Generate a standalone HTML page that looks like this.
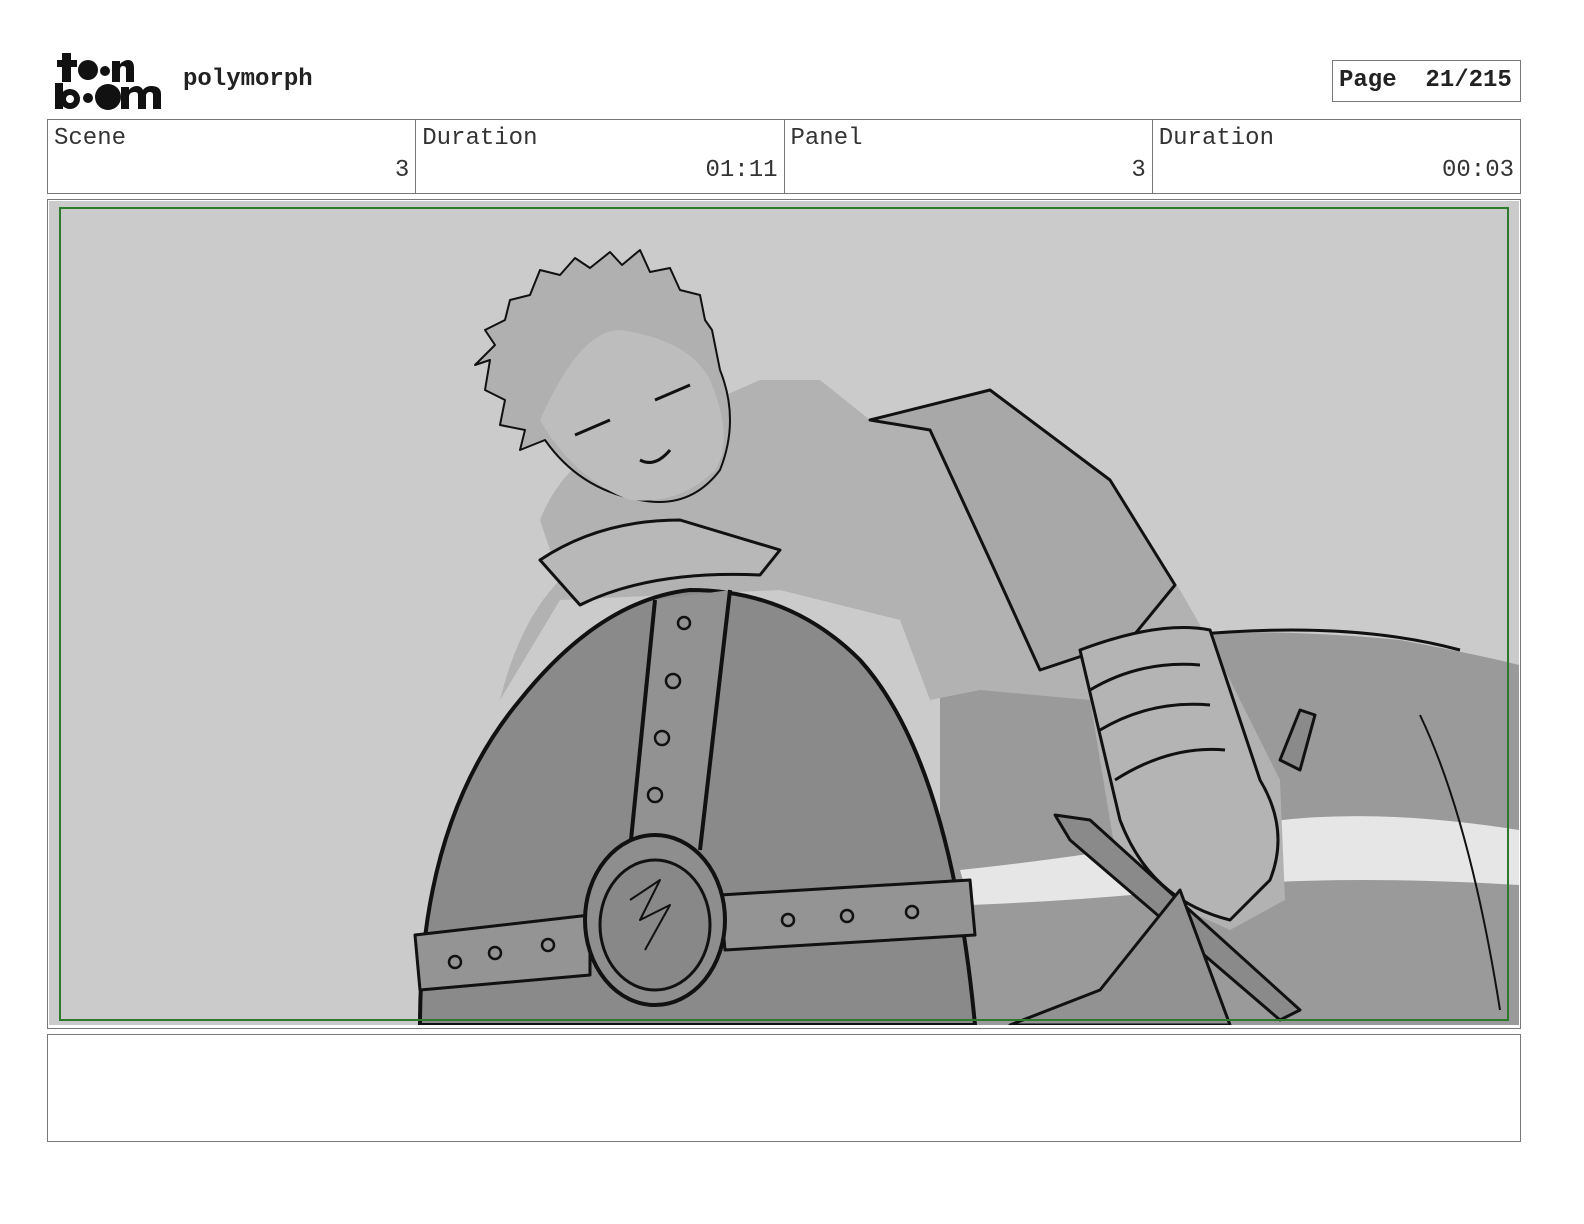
<!DOCTYPE html>
<html><head><meta charset="utf-8"><style>
*{margin:0;padding:0;box-sizing:border-box}
body{width:1584px;height:1224px;background:#fff;position:relative;overflow:hidden;font-family:"Liberation Mono",monospace;color:#333}
.abs{position:absolute}
.title{left:183px;top:66px;font-weight:bold;font-size:24px;line-height:28px;color:#222}
.page{left:1332px;top:60px;width:189px;height:42px;border:1px solid #777;font-weight:bold;font-size:24px;line-height:28px;padding:6px 0 0 6px;white-space:pre;color:#222}
.tbl{left:47px;top:119px;width:1474px;height:75px;border:1px solid #777;display:flex}
.cell{flex:1;border-right:1px solid #777;position:relative;font-size:24px;line-height:28px}
.cell:last-child{border-right:none}
.cell .l{position:absolute;left:6px;top:5px}
.cell .v{position:absolute;right:6px;top:37px}
.frame{left:47px;top:199px;width:1474px;height:830px;border:1px solid #777;background:#fff}
.img{left:49px;top:201px;width:1470px;height:824px;background:#cbcbcb;overflow:hidden}
.green{left:59px;top:207px;width:1450px;height:814px;border:2px solid #2d7a2d}
.notes{left:47px;top:1034px;width:1474px;height:108px;border:1px solid #777}
</style></head><body>
<svg class="abs" style="left:0;top:0" width="170" height="115" viewBox="0 0 170 115">
<g fill="#111">
<rect x="62" y="53" width="9" height="29"/><rect x="57" y="60" width="20" height="7"/>
<circle cx="88" cy="70" r="10"/><circle cx="105" cy="71" r="5"/>
<path d="M112 82 V61 H120 V64 Q124 60 128 60 Q134 60 134 68 V82 H126 V69 Q126 66 123 66 Q120 66 120 70 V82 Z"/>
<rect x="55" y="83" width="8" height="26"/><circle cx="70" cy="99" r="10"/><circle cx="70" cy="99" r="4" fill="#fff"/>
<circle cx="88" cy="98" r="5"/><circle cx="108" cy="97" r="13"/>
<path d="M121 109 V87 H129 V90 Q132 86 137 86 Q141 86 143 90 Q146 86 151 86 Q161 86 161 94 V109 H153 V95 Q153 92 150 92 Q146 92 146 96 V109 H138 V95 Q138 92 135 92 Q129 92 129 97 V109 Z"/>
</g></svg>
<div class="abs title">polymorph</div>
<div class="abs page">Page  21/215</div>
<div class="abs tbl">
<div class="cell"><span class="l">Scene</span><span class="v">3</span></div>
<div class="cell"><span class="l">Duration</span><span class="v">01:11</span></div>
<div class="cell"><span class="l">Panel</span><span class="v">3</span></div>
<div class="cell"><span class="l">Duration</span><span class="v">00:03</span></div>
</div>
<div class="abs frame"></div>
<div class="abs img">
<svg width="1470" height="824" viewBox="49 201 1470 824" fill="none" stroke="#111" stroke-width="3" stroke-linejoin="round">
<path d="M940 650 Q1200 620 1400 640 Q1480 655 1519 665 L1519 1025 L940 1025 Z" fill="#9a9a9a" stroke="none"/>
<path d="M960 870 Q1100 855 1200 835 Q1330 800 1519 830 L1519 885 Q1350 875 1230 885 Q1100 900 970 905 Z" fill="#e6e6e6" stroke="none"/>
<path d="M1190 635 Q1350 620 1460 650" />
<path d="M500 700 Q520 620 560 580 L540 520 Q560 470 600 450 L760 380 L820 380 L870 420 L990 395 Q1050 430 1110 480 L1180 590 L1220 660 L1280 780 L1285 900 L1230 930 L1120 880 L1090 700 L980 690 L930 700 L900 620 L780 590 L560 600 Z" fill="#b2b2b2" stroke="none"/>
<path d="M870 420 L990 390 L1110 480 L1175 585 L1130 640 L1040 670 L990 560 L930 430 Z" fill="#a8a8a8"/>
<path d="M1080 650 Q1160 620 1210 630 L1260 780 Q1290 830 1270 880 L1230 920 Q1150 900 1120 820 Z" fill="#b4b4b4"/>
<path d="M1090 690 Q1140 660 1200 665 M1100 730 Q1150 700 1210 705 M1115 780 Q1170 745 1225 750"/>
<path d="M490 360 L475 365 L495 345 L485 330 L505 320 L510 300 L530 295 L540 270 L560 275 L575 258 L590 268 L610 252 L622 265 L640 250 L650 272 L670 268 L680 290 L700 295 L705 320 L712 330 L720 370 Q740 420 720 470 Q690 510 640 500 Q580 490 545 440 L520 450 L525 430 L500 425 L505 400 L485 390 Z" fill="#b0b0b0" stroke-width="2"/>
<path d="M540 420 Q580 330 620 330 Q690 340 710 380 Q735 440 715 470 Q680 505 630 500 Q575 480 540 420 Z" fill="#bdbdbd" stroke="none"/>
<path d="M575 435 L610 420 M655 400 L690 385 M640 460 Q655 468 670 450"/>
<path d="M540 560 Q600 520 680 520 L780 550 L760 575 Q650 570 580 605 Z" fill="#b8b8b8"/>
<path d="M1280 760 L1300 710 L1315 715 L1300 770 Z" fill="#8a8a8a"/>
<path d="M1055 815 L1090 820 L1300 1010 L1280 1020 L1070 840 Z" fill="#8a8a8a"/>
<path d="M1180 890 L1100 990 L1010 1025 L1230 1025 Z" fill="#929292"/>
<path d="M420 1025 Q420 820 520 700 Q600 600 690 590 Q790 590 860 660 Q950 760 975 1025 Z" fill="#8a8a8a" stroke-width="4"/>
<path d="M655 600 L730 590 L700 850 L630 850 Z" fill="#929292" stroke="none"/>
<path d="M655 600 L630 850 M730 590 L700 850" stroke-width="4"/>
<path d="M415 935 L590 915 L590 975 L420 990 Z" fill="#949494"/>
<path d="M720 895 L970 880 L975 935 L725 950 Z" fill="#949494"/>
<ellipse cx="655" cy="920" rx="70" ry="85" fill="#8e8e8e" stroke-width="4"/>
<ellipse cx="655" cy="925" rx="55" ry="65" fill="#888"/>
<path d="M630 900 L660 880 L640 920 L670 905 L645 950" stroke-width="2"/>
<g stroke-width="2.5"><circle cx="684" cy="623" r="6"/><circle cx="673" cy="681" r="7"/><circle cx="662" cy="738" r="7"/><circle cx="655" cy="795" r="7"/><circle cx="455" cy="962" r="6"/><circle cx="495" cy="953" r="6"/><circle cx="548" cy="945" r="6"/><circle cx="788" cy="920" r="6"/><circle cx="847" cy="916" r="6"/><circle cx="912" cy="912" r="6"/></g>
<path d="M1420 715 Q1470 820 1500 1010" stroke-width="2"/>
</svg>
</div>
<div class="abs green"></div>
<div class="abs notes"></div>
</body></html>
